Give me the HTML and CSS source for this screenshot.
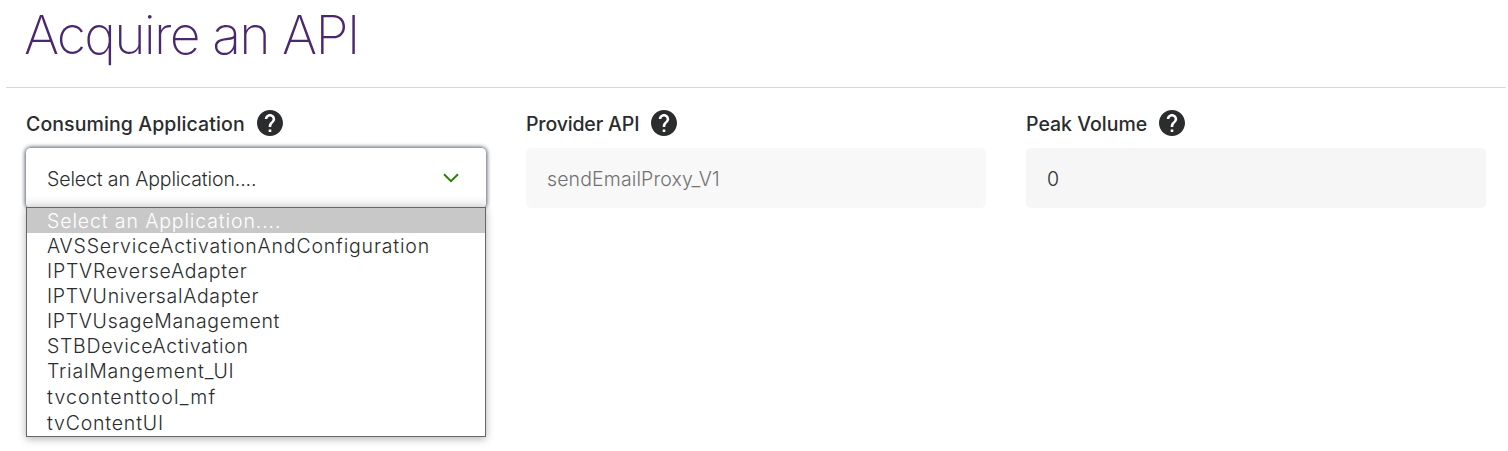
FILE: index.html
```html
<!DOCTYPE html>
<html lang="en">
<head>
<meta charset="utf-8">
<title>Acquire an API</title>
<link rel="stylesheet" href="styles.css">
</head>
<body>
<svg class="sprite" width="0" height="0"><symbol id="help" viewBox="2 2 20 20"><path d="M12 2C6.48 2 2 6.48 2 12s4.48 10 10 10 10-4.48 10-10S17.52 2 12 2zm1 17h-2v-2h2v2zm2.07-7.75l-.9.92C13.45 12.9 13 13.5 13 15h-2v-.5c0-1.1.45-2.1 1.17-2.83l1.24-1.26c.37-.36.59-.86.59-1.41 0-1.1-.9-2-2-2s-2 .9-2 2H8c0-2.21 1.79-4 4-4s4 1.79 4 4c0 .88-.36 1.68-.93 2.25z"/></symbol></svg>
<header class="page-header"><h1 class="title">Acquire an API</h1></header>
<main class="fields">
  <section class="field">
    <div class="label"><span class="label-text consuming">Consuming Application</span><svg class="help"><use href="#help"/></svg></div>
    <div class="control select">
      <span class="value selected">Select an Application....</span>
      <svg class="chevron" viewBox="0 0 16 10"><path d="M1 1.2 8 8.2 15 1.2"/></svg>
      <ul class="menu">
        <li class="option active"><span class="o1">Select an Application....</span></li>
        <li class="option"><span class="o2">AVSServiceActivationAndConfiguration</span></li>
        <li class="option"><span class="o3">IPTVReverseAdapter</span></li>
        <li class="option"><span class="o4">IPTVUniversalAdapter</span></li>
        <li class="option"><span class="o5">IPTVUsageManagement</span></li>
        <li class="option"><span class="o6">STBDeviceActivation</span></li>
        <li class="option"><span class="o7">TrialMangement_UI</span></li>
        <li class="option tall"><span class="o8">tvcontenttool_mf</span></li>
        <li class="option tall last"><span class="o9">tvContentUI</span></li>
      </ul>
    </div>
  </section>
  <section class="field">
    <div class="label"><span class="label-text provider">Provider API</span><svg class="help"><use href="#help"/></svg></div>
    <div class="control readonly"><span class="value proxy">sendEmailProxy_V1</span></div>
  </section>
  <section class="field">
    <div class="label"><span class="label-text peak">Peak Volume</span><svg class="help"><use href="#help"/></svg></div>
    <div class="control number"><span class="value">0</span></div>
  </section>
</main>
</body>
</html>
```
FILE: styles.css
```css
* { box-sizing: border-box; }
body { margin: 0; height: 451px; overflow: hidden; background: #fff; color: #2a2c2e; font-family: Inter, "Liberation Sans", sans-serif; }
.sprite { display: block; }
.page-header { height: 88px; margin: 0 2px 0 6px; padding: 2px 0 0 18px; border-bottom: 1px solid #d8d8d8; }
.title { margin: 0; font-size: 53.5px; font-weight: 200; line-height: 65px; letter-spacing: -1.75px; color: #4b286d; white-space: nowrap; }
.fields { display: grid; grid-template-columns: repeat(3, 460px); column-gap: 40px; padding: 21px 0 0 26px; }
.label { display: flex; align-items: center; height: 28px; margin-bottom: 11px; }
.label-text { padding-top: 2px; font-size: 19.5px; font-weight: 500; line-height: 28px; white-space: nowrap; }
.consuming { letter-spacing: .1px; }
.provider { letter-spacing: -.15px; }
.help { width: 26px; height: 26px; margin-left: 12px; fill: #2a2c2e; }
.control { position: relative; display: flex; align-items: center; justify-content: space-between; height: 60px; padding: 2px 21px 0; border-radius: 5px; }
.value { font-size: 19.5px; font-weight: 300; line-height: 28px; white-space: nowrap; }
.selected { letter-spacing: -.12px; }
.proxy { letter-spacing: .12px; }
.select { background: linear-gradient(#fff 78%, #eee); box-shadow: 0 0 4px 1px #555c61; padding-right: 27px; }
.readonly { background: #f8f8f8; color: #727272; }
.number { background: #f6f6f6; }
.chevron { width: 16px; height: 10px; margin-top: -3px; fill: none; stroke: #2b8000; stroke-width: 2; }
.menu { position: absolute; top: 59px; left: 0; width: 460px; margin: 0; padding: 0; list-style: none; background: #fff; border: 1px solid #666; box-shadow: 0 2px 8px rgba(0,0,0,.3); }
.option { height: 25px; padding-left: 20px; font-size: 19.5px; font-weight: 300; line-height: 27px; white-space: nowrap; }
.tall { height: 26px; line-height: 29px; }
.last { height: 27px; }
.active { background: #c8c8c8; color: #fff; }
.o1 { letter-spacing: .88px; }
.o2 { letter-spacing: .82px; }
.o3 { letter-spacing: .78px; }
.o4 { letter-spacing: .68px; }
.o5 { letter-spacing: .68px; }
.o6 { letter-spacing: .7px; }
.o7 { letter-spacing: .78px; }
.o8 { letter-spacing: 1.15px; }
.o9 { letter-spacing: .8px; }
```
